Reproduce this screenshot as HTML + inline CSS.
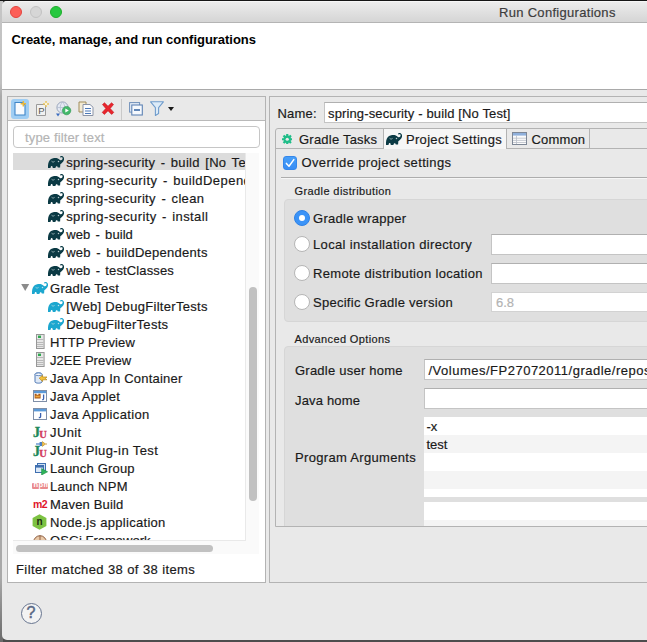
<!DOCTYPE html>
<html lang="en">
<head>
<meta charset="utf-8">
<title>Run Configurations</title>
<style>
*{box-sizing:border-box;margin:0;padding:0}
html,body{width:647px;height:642px;overflow:hidden}
body{position:relative;background:#4d4d4d;font-family:"Liberation Sans",sans-serif;font-size:13px;color:#1a1a1a}
.abs{position:absolute}
.t{position:absolute;white-space:nowrap;line-height:16px;height:16px;-webkit-text-stroke:.18px currentColor}
#strip{left:0;top:0;width:3px;height:642px;background:linear-gradient(#c6c6c6 0,#c0c0c0 13%,#a9a9a9 15%,#a9a9a9 90%,#6a6a6a 100%)}
#topline{left:0;top:0;width:647px;height:1px;background:#151515}
#win{left:2px;top:1px;width:700px;height:639px;background:#e9e9e9;border-radius:5px 0 0 5px;overflow:hidden}
#titlebar{left:0;top:0;width:700px;height:22px;background:linear-gradient(#ececec,#d5d5d5);border-bottom:1px solid #b4b4b4;border-top:1px solid #f6f6f6}
.tl{position:absolute;top:4px;width:12px;height:12px;border-radius:50%;border:1px solid}
#header{left:0;top:22px;width:700px;height:66px;background:#fff}
#hsep{left:0;top:88px;width:700px;height:1px;background:#a9a9a9}
#lp{left:5px;top:95px;width:259px;height:487px;background:#fff;border:1px solid #b3b3b3}
#tb{left:0;top:0;width:257px;height:24px;background:#e9e9e9;border-bottom:1px solid #b9b9b9}
#filter{left:5px;top:29px;width:247px;height:22px;border:1px solid #c6c6c6;border-radius:4px;background:#fff}
#tree{left:5px;top:56px;width:232px;height:387px;overflow:hidden}
.row{position:absolute;left:0;width:232px;height:18px}
.row .t{top:2px}
.ic{position:absolute}
#vtrack{left:237px;top:56px;width:14px;height:401px;background:#fafafa;border-left:1px solid #e9e9e9}
#vthumb{left:3px;top:134px;width:8px;height:214px;border-radius:4px;background:#c1c1c1}
#htrack{left:5px;top:443px;width:233px;height:14px;background:#fafafa;border-top:1px solid #e9e9e9}
#hthumb{left:3px;top:4px;width:197px;height:7px;border-radius:4px;background:#c1c1c1}
#rp{left:267px;top:95px;width:440px;height:487px;border:1px solid #b3b3b3;background:#e9e9e9}
.inp{position:absolute;background:#fff;border:1px solid #c4c4c4;border-top-color:#b0b0b0}
#tabs{left:5px;top:31px;width:440px;height:399px;border:1px solid #b3b3b3;border-radius:3px 0 0 0;overflow:hidden}
.tab{position:absolute;top:0;height:20px;border-right:1px solid #b3b3b3;border-bottom:1px solid #b3b3b3}
#tabline{left:0;top:19px;width:440px;height:1px;background:#b3b3b3}
.grp{position:absolute;left:8px;width:440px;background:#dfdfdf;border:1px solid #d6d6d6;border-radius:4px 0 0 4px}
.small{font-size:11px;line-height:14px;height:14px}
.radio{position:absolute;width:16px;height:16px;border-radius:50%;background:#fff;border:1px solid #b5b5b5}
.radio.on{background:#3b93f7;border-color:#2f82e6}
.radio.on::after{content:"";position:absolute;left:4px;top:4px;width:6px;height:6px;border-radius:50%;background:#fff}
.zr{position:absolute;left:0;width:300px;height:18px}
</style>
</head>
<body>
<div id="strip" class="abs"></div>
<div id="win" class="abs">
  <div id="titlebar" class="abs">
    <div class="tl" style="left:8px;background:#fc5f58;border-color:#e2453f"></div>
    <div class="tl" style="left:28px;background:#d6d6d6;border-color:#c2c2c2"></div>
    <div class="tl" style="left:48px;background:#27c840;border-color:#1dad2b"></div>
    <div class="t" id="title" style="letter-spacing:0.3px;left:497px;top:3px;color:#3c3c3c">Run Configurations</div>
  </div>
  <div id="header" class="abs">
    <div class="t" id="htext" style="letter-spacing:-0.03px;left:9.5px;top:9px;font-weight:bold;color:#000;-webkit-text-stroke:0">Create, manage, and run configurations</div>
  </div>
  <div id="hsep" class="abs"></div>

  <!-- LEFT PANEL -->
  <div id="lp" class="abs">
    <div id="tb" class="abs">
      <div class="abs" style="left:3px;top:2px;width:18px;height:20px;border-radius:3px;background:#9fcdf3"></div>
      <svg class="ic" style="left:6px;top:4px" width="13" height="15" viewBox="0 0 13 15"><path d="M1,1.5H8.5L11,4V14H1Z" fill="#f7fafe" stroke="#3f86c8" stroke-width="1.1"/><path d="M9.3,0V5.4M6.6,2.7H12" stroke="#e9b73a" stroke-width="1.5"/></svg>
      <svg class="ic" style="left:28px;top:4px" width="14" height="15" viewBox="0 0 14 15"><path d="M.5,3.5H9.5V14.5H.5Z" fill="#f1f1f1" stroke="#9a9a9a"/><text x="2.3" y="12.6" font-family="Liberation Sans,sans-serif" font-size="9.5" fill="#555">P</text><path d="M10,0V6M7,3H13" stroke="#e9c45a" stroke-width="1.5"/><circle cx="10" cy="3" r="1.2" fill="#fff7da"/></svg>
      <svg class="ic" style="left:47px;top:4px" width="17" height="16" viewBox="0 0 17 16"><circle cx="7.5" cy="6.5" r="5.6" fill="#e4e9f2" stroke="#9aa5bb" stroke-width="1"/><path d="M2,6.5H13M7.5,1C4.5,4 4.5,9 7.5,12M7.5,1C10.5,4 10.5,9 7.5,12" fill="none" stroke="#b4bdd0" stroke-width=".8"/><circle cx="11.6" cy="9.6" r="4.2" fill="#43b86a" stroke="#2b9650" stroke-width=".6"/><path d="M10.3,7.6L13.8,9.6L10.3,11.6Z" fill="#fff"/><path d="M1,12.5H5L3,15.5Z" fill="#3b6cc0"/></svg>
      <svg class="ic" style="left:70px;top:4px" width="16" height="15" viewBox="0 0 16 15"><path d="M1,1H8V11H1Z" fill="#f3ead2" stroke="#a08c5a" stroke-width="1"/><path d="M5,3.5H12L15,6.2V14.5H5Z" fill="#fbfcfe" stroke="#8a93a6" stroke-width="1"/><path d="M7,7.5H13M7,10H13M7,12.5H13" stroke="#4a78b8" stroke-width="1"/></svg>
      <svg class="ic" style="left:93px;top:5px" width="14" height="13" viewBox="0 0 14 13"><path d="M1.5,2.5L3.5,.8L7,4.2L10.5,.8L12.5,2.5L9.2,6.5L12.8,10.4L10.6,12.4L7,8.8L3.4,12.4L1.2,10.4L4.8,6.5Z" fill="#e8262d" stroke="#c4161d" stroke-width=".6"/></svg>
      <div class="abs" style="left:113px;top:2px;width:1px;height:21px;background:#c9c9c9"></div>
      <svg class="ic" style="left:121px;top:5px" width="14" height="14" viewBox="0 0 14 14"><rect x=".6" y=".6" width="10" height="9.5" fill="#e6eef8" stroke="#6f8fb8" stroke-width="1"/><rect x="2.8" y="3" width="10.5" height="10" fill="#f6f9fd" stroke="#5f83b4" stroke-width="1.1"/><path d="M5,8H11" stroke="#2f5f9f" stroke-width="1.4"/></svg>
      <svg class="ic" style="left:142px;top:4px" width="14" height="15" viewBox="0 0 14 15"><path d="M.6,.8H13.4L8.6,6.6V12.6L5.4,14.4V6.6Z" fill="#dcebf8" stroke="#6f9ccc" stroke-width="1.1" stroke-linejoin="round"/></svg>
      <svg class="ic" style="left:160px;top:10px" width="6" height="4" viewBox="0 0 6 4"><path d="M0,0H6L3,4Z" fill="#1a1a1a"/></svg>

    </div>
    <div id="filter" class="abs"><div class="t" style="left:11px;top:3px;color:#b4b4b4;letter-spacing:.14px">type filter text</div></div>
    <div id="tree" class="abs">
      <div class="row" style="top:0px;background:#dcdcdc;height:17px"><svg class="ic" style="left:35px;top:3px" width="16" height="12" viewBox="0 0 16 12"><path d="M0,11.9 C-0.2,8 0.5,5 3,3.1 C4.5,2.1 7.5,1.7 9.3,2.2 C10.5,2.6 11.2,3.5 11.9,3.9 C12.8,4.4 13.8,4.2 14.3,3.4 C14.8,2.6 14.7,1.7 14.1,1.3 C13.6,1 13,1.2 12.7,1.6 L11.8,0.9 C12.4,0 13.8,-0.2 14.9,0.5 C16.2,1.4 16.4,3.2 15.7,4.6 C15,6.2 13.8,7.4 12.3,8.3 L12.1,11.6 L9.8,11.6 C9.6,10.6 9.2,10.3 8.6,10.3 C8,10.3 7.7,10.8 7.4,11.9 L4.8,11.9 C4.6,10.6 4.2,10.1 3.7,10.1 C3.1,10.1 2.8,10.7 2.5,11.9 Z" fill="#0b3a44"/><path d="M3.5,5.2 Q5,7.2 6.6,5.4" stroke="#d8e8ea" stroke-width=".8" fill="none" opacity=".75"/><circle cx="10.5" cy="5.4" r=".75" fill="#e6f0f2" opacity=".8"/></svg><div class="t tr" style="left:53.2px;letter-spacing:0.308px;word-spacing:1.5px">spring-security - build [No Test]</div></div>
      <div class="row" style="top:18px"><svg class="ic" style="left:35px;top:3px" width="16" height="12" viewBox="0 0 16 12"><path d="M0,11.9 C-0.2,8 0.5,5 3,3.1 C4.5,2.1 7.5,1.7 9.3,2.2 C10.5,2.6 11.2,3.5 11.9,3.9 C12.8,4.4 13.8,4.2 14.3,3.4 C14.8,2.6 14.7,1.7 14.1,1.3 C13.6,1 13,1.2 12.7,1.6 L11.8,0.9 C12.4,0 13.8,-0.2 14.9,0.5 C16.2,1.4 16.4,3.2 15.7,4.6 C15,6.2 13.8,7.4 12.3,8.3 L12.1,11.6 L9.8,11.6 C9.6,10.6 9.2,10.3 8.6,10.3 C8,10.3 7.7,10.8 7.4,11.9 L4.8,11.9 C4.6,10.6 4.2,10.1 3.7,10.1 C3.1,10.1 2.8,10.7 2.5,11.9 Z" fill="#0b3a44"/><path d="M3.5,5.2 Q5,7.2 6.6,5.4" stroke="#d8e8ea" stroke-width=".8" fill="none" opacity=".75"/><circle cx="10.5" cy="5.4" r=".75" fill="#e6f0f2" opacity=".8"/></svg><div class="t tr" style="left:53.2px;letter-spacing:0.44799999999999995px;word-spacing:1.5px">spring-security - buildDependents</div></div>
      <div class="row" style="top:36px"><svg class="ic" style="left:35px;top:3px" width="16" height="12" viewBox="0 0 16 12"><path d="M0,11.9 C-0.2,8 0.5,5 3,3.1 C4.5,2.1 7.5,1.7 9.3,2.2 C10.5,2.6 11.2,3.5 11.9,3.9 C12.8,4.4 13.8,4.2 14.3,3.4 C14.8,2.6 14.7,1.7 14.1,1.3 C13.6,1 13,1.2 12.7,1.6 L11.8,0.9 C12.4,0 13.8,-0.2 14.9,0.5 C16.2,1.4 16.4,3.2 15.7,4.6 C15,6.2 13.8,7.4 12.3,8.3 L12.1,11.6 L9.8,11.6 C9.6,10.6 9.2,10.3 8.6,10.3 C8,10.3 7.7,10.8 7.4,11.9 L4.8,11.9 C4.6,10.6 4.2,10.1 3.7,10.1 C3.1,10.1 2.8,10.7 2.5,11.9 Z" fill="#0b3a44"/><path d="M3.5,5.2 Q5,7.2 6.6,5.4" stroke="#d8e8ea" stroke-width=".8" fill="none" opacity=".75"/><circle cx="10.5" cy="5.4" r=".75" fill="#e6f0f2" opacity=".8"/></svg><div class="t tr" style="left:53.2px;letter-spacing:0.348px;word-spacing:1.5px">spring-security - clean</div></div>
      <div class="row" style="top:54px"><svg class="ic" style="left:35px;top:3px" width="16" height="12" viewBox="0 0 16 12"><path d="M0,11.9 C-0.2,8 0.5,5 3,3.1 C4.5,2.1 7.5,1.7 9.3,2.2 C10.5,2.6 11.2,3.5 11.9,3.9 C12.8,4.4 13.8,4.2 14.3,3.4 C14.8,2.6 14.7,1.7 14.1,1.3 C13.6,1 13,1.2 12.7,1.6 L11.8,0.9 C12.4,0 13.8,-0.2 14.9,0.5 C16.2,1.4 16.4,3.2 15.7,4.6 C15,6.2 13.8,7.4 12.3,8.3 L12.1,11.6 L9.8,11.6 C9.6,10.6 9.2,10.3 8.6,10.3 C8,10.3 7.7,10.8 7.4,11.9 L4.8,11.9 C4.6,10.6 4.2,10.1 3.7,10.1 C3.1,10.1 2.8,10.7 2.5,11.9 Z" fill="#0b3a44"/><path d="M3.5,5.2 Q5,7.2 6.6,5.4" stroke="#d8e8ea" stroke-width=".8" fill="none" opacity=".75"/><circle cx="10.5" cy="5.4" r=".75" fill="#e6f0f2" opacity=".8"/></svg><div class="t tr" style="left:53.2px;letter-spacing:0.389px;word-spacing:1.5px">spring-security - install</div></div>
      <div class="row" style="top:72px"><svg class="ic" style="left:35px;top:3px" width="16" height="12" viewBox="0 0 16 12"><path d="M0,11.9 C-0.2,8 0.5,5 3,3.1 C4.5,2.1 7.5,1.7 9.3,2.2 C10.5,2.6 11.2,3.5 11.9,3.9 C12.8,4.4 13.8,4.2 14.3,3.4 C14.8,2.6 14.7,1.7 14.1,1.3 C13.6,1 13,1.2 12.7,1.6 L11.8,0.9 C12.4,0 13.8,-0.2 14.9,0.5 C16.2,1.4 16.4,3.2 15.7,4.6 C15,6.2 13.8,7.4 12.3,8.3 L12.1,11.6 L9.8,11.6 C9.6,10.6 9.2,10.3 8.6,10.3 C8,10.3 7.7,10.8 7.4,11.9 L4.8,11.9 C4.6,10.6 4.2,10.1 3.7,10.1 C3.1,10.1 2.8,10.7 2.5,11.9 Z" fill="#0b3a44"/><path d="M3.5,5.2 Q5,7.2 6.6,5.4" stroke="#d8e8ea" stroke-width=".8" fill="none" opacity=".75"/><circle cx="10.5" cy="5.4" r=".75" fill="#e6f0f2" opacity=".8"/></svg><div class="t tr" style="left:53.2px;letter-spacing:0.08px;word-spacing:1.5px">web - build</div></div>
      <div class="row" style="top:90px"><svg class="ic" style="left:35px;top:3px" width="16" height="12" viewBox="0 0 16 12"><path d="M0,11.9 C-0.2,8 0.5,5 3,3.1 C4.5,2.1 7.5,1.7 9.3,2.2 C10.5,2.6 11.2,3.5 11.9,3.9 C12.8,4.4 13.8,4.2 14.3,3.4 C14.8,2.6 14.7,1.7 14.1,1.3 C13.6,1 13,1.2 12.7,1.6 L11.8,0.9 C12.4,0 13.8,-0.2 14.9,0.5 C16.2,1.4 16.4,3.2 15.7,4.6 C15,6.2 13.8,7.4 12.3,8.3 L12.1,11.6 L9.8,11.6 C9.6,10.6 9.2,10.3 8.6,10.3 C8,10.3 7.7,10.8 7.4,11.9 L4.8,11.9 C4.6,10.6 4.2,10.1 3.7,10.1 C3.1,10.1 2.8,10.7 2.5,11.9 Z" fill="#0b3a44"/><path d="M3.5,5.2 Q5,7.2 6.6,5.4" stroke="#d8e8ea" stroke-width=".8" fill="none" opacity=".75"/><circle cx="10.5" cy="5.4" r=".75" fill="#e6f0f2" opacity=".8"/></svg><div class="t tr" style="left:53.2px;letter-spacing:0.262px;word-spacing:1.5px">web - buildDependents</div></div>
      <div class="row" style="top:108px"><svg class="ic" style="left:35px;top:3px" width="16" height="12" viewBox="0 0 16 12"><path d="M0,11.9 C-0.2,8 0.5,5 3,3.1 C4.5,2.1 7.5,1.7 9.3,2.2 C10.5,2.6 11.2,3.5 11.9,3.9 C12.8,4.4 13.8,4.2 14.3,3.4 C14.8,2.6 14.7,1.7 14.1,1.3 C13.6,1 13,1.2 12.7,1.6 L11.8,0.9 C12.4,0 13.8,-0.2 14.9,0.5 C16.2,1.4 16.4,3.2 15.7,4.6 C15,6.2 13.8,7.4 12.3,8.3 L12.1,11.6 L9.8,11.6 C9.6,10.6 9.2,10.3 8.6,10.3 C8,10.3 7.7,10.8 7.4,11.9 L4.8,11.9 C4.6,10.6 4.2,10.1 3.7,10.1 C3.1,10.1 2.8,10.7 2.5,11.9 Z" fill="#0b3a44"/><path d="M3.5,5.2 Q5,7.2 6.6,5.4" stroke="#d8e8ea" stroke-width=".8" fill="none" opacity=".75"/><circle cx="10.5" cy="5.4" r=".75" fill="#e6f0f2" opacity=".8"/></svg><div class="t tr" style="left:53.2px;letter-spacing:0.125px;word-spacing:1.5px">web - testClasses</div></div>
      <div class="row" style="top:126px"><svg class="ic" style="left:8.3px;top:5px" width="8.4" height="7" viewBox="0 0 8 7"><path d="M0,0H8L4,7Z" fill="#8b8b8b"/></svg><svg class="ic" style="left:19px;top:3px" width="16" height="12" viewBox="0 0 16 12"><path d="M0,11.9 C-0.2,8 0.5,5 3,3.1 C4.5,2.1 7.5,1.7 9.3,2.2 C10.5,2.6 11.2,3.5 11.9,3.9 C12.8,4.4 13.8,4.2 14.3,3.4 C14.8,2.6 14.7,1.7 14.1,1.3 C13.6,1 13,1.2 12.7,1.6 L11.8,0.9 C12.4,0 13.8,-0.2 14.9,0.5 C16.2,1.4 16.4,3.2 15.7,4.6 C15,6.2 13.8,7.4 12.3,8.3 L12.1,11.6 L9.8,11.6 C9.6,10.6 9.2,10.3 8.6,10.3 C8,10.3 7.7,10.8 7.4,11.9 L4.8,11.9 C4.6,10.6 4.2,10.1 3.7,10.1 C3.1,10.1 2.8,10.7 2.5,11.9 Z" fill="#1ca7cf"/><path d="M3.5,5.2 Q5,7.2 6.6,5.4" stroke="#d8e8ea" stroke-width=".8" fill="none" opacity=".75"/><circle cx="10.5" cy="5.4" r=".75" fill="#e6f0f2" opacity=".8"/></svg><div class="t tr" style="left:37.1px;letter-spacing:0.258px">Gradle Test</div></div>
      <div class="row" style="top:144px"><svg class="ic" style="left:35px;top:3px" width="16" height="12" viewBox="0 0 16 12"><path d="M0,11.9 C-0.2,8 0.5,5 3,3.1 C4.5,2.1 7.5,1.7 9.3,2.2 C10.5,2.6 11.2,3.5 11.9,3.9 C12.8,4.4 13.8,4.2 14.3,3.4 C14.8,2.6 14.7,1.7 14.1,1.3 C13.6,1 13,1.2 12.7,1.6 L11.8,0.9 C12.4,0 13.8,-0.2 14.9,0.5 C16.2,1.4 16.4,3.2 15.7,4.6 C15,6.2 13.8,7.4 12.3,8.3 L12.1,11.6 L9.8,11.6 C9.6,10.6 9.2,10.3 8.6,10.3 C8,10.3 7.7,10.8 7.4,11.9 L4.8,11.9 C4.6,10.6 4.2,10.1 3.7,10.1 C3.1,10.1 2.8,10.7 2.5,11.9 Z" fill="#1ca7cf"/><path d="M3.5,5.2 Q5,7.2 6.6,5.4" stroke="#d8e8ea" stroke-width=".8" fill="none" opacity=".75"/><circle cx="10.5" cy="5.4" r=".75" fill="#e6f0f2" opacity=".8"/></svg><div class="t tr" style="left:53.2px;letter-spacing:0.308px">[Web] DebugFilterTests</div></div>
      <div class="row" style="top:162px"><svg class="ic" style="left:35px;top:3px" width="16" height="12" viewBox="0 0 16 12"><path d="M0,11.9 C-0.2,8 0.5,5 3,3.1 C4.5,2.1 7.5,1.7 9.3,2.2 C10.5,2.6 11.2,3.5 11.9,3.9 C12.8,4.4 13.8,4.2 14.3,3.4 C14.8,2.6 14.7,1.7 14.1,1.3 C13.6,1 13,1.2 12.7,1.6 L11.8,0.9 C12.4,0 13.8,-0.2 14.9,0.5 C16.2,1.4 16.4,3.2 15.7,4.6 C15,6.2 13.8,7.4 12.3,8.3 L12.1,11.6 L9.8,11.6 C9.6,10.6 9.2,10.3 8.6,10.3 C8,10.3 7.7,10.8 7.4,11.9 L4.8,11.9 C4.6,10.6 4.2,10.1 3.7,10.1 C3.1,10.1 2.8,10.7 2.5,11.9 Z" fill="#1ca7cf"/><path d="M3.5,5.2 Q5,7.2 6.6,5.4" stroke="#d8e8ea" stroke-width=".8" fill="none" opacity=".75"/><circle cx="10.5" cy="5.4" r=".75" fill="#e6f0f2" opacity=".8"/></svg><div class="t tr" style="left:53.2px;letter-spacing:0.29px">DebugFilterTests</div></div>
      <div class="row" style="top:180px"><svg class="ic" style="left:23px;top:1px" width="9" height="15" viewBox="0 0 9 15"><rect x=".5" y=".5" width="7.6" height="14" fill="#e6e6e6" stroke="#979797"/><rect x="2" y="1.6" width="3" height="2.4" fill="#2fa84f"/><path d="M1,5.5H7.6M1,8.5H7.6M1,10.5H7.6M1,12.5H7.6" stroke="#b9b9b9" stroke-width="1"/></svg><div class="t tr" style="left:37.1px;letter-spacing:0.105px">HTTP Preview</div></div>
      <div class="row" style="top:198px"><svg class="ic" style="left:23px;top:1px" width="9" height="15" viewBox="0 0 9 15"><rect x=".5" y=".5" width="7.6" height="14" fill="#e6e6e6" stroke="#979797"/><rect x="2" y="1.6" width="3" height="2.4" fill="#2fa84f"/><path d="M1,5.5H7.6M1,8.5H7.6M1,10.5H7.6M1,12.5H7.6" stroke="#b9b9b9" stroke-width="1"/></svg><div class="t tr" style="left:37.1px;letter-spacing:0.021px">J2EE Preview</div></div>
      <div class="row" style="top:216px"><svg class="ic" style="left:21px;top:3px" width="14" height="12" viewBox="0 0 14 12"><path d="M1,2.2 C1,0.4 8,0.4 8,2.2 V9.8 C8,11.6 1,11.6 1,9.8 Z" fill="#dfe9f6" stroke="#4f78b4" stroke-width="1"/><ellipse cx="4.5" cy="2.3" rx="3.5" ry="1.3" fill="#f4f8fd" stroke="#4f78b4" stroke-width=".8"/><path d="M5.2,6.2 L8.6,3.2 V5 H13 L11.2,6.4 L13,7.8 H8.6 V9.4 Z" fill="#f4c23c" stroke="#b9861a" stroke-width=".7"/></svg><div class="t tr" style="left:37.1px;letter-spacing:0.215px">Java App In Container</div></div>
      <div class="row" style="top:234px"><svg class="ic" style="left:20px;top:3px" width="14" height="12" viewBox="0 0 14 12"><rect x=".5" y=".5" width="13" height="11" fill="#fff" stroke="#7f8fa8"/><rect x="1" y="1" width="12" height="2.2" fill="#5b9ad8"/><path d="M1.6,3.8 H3.6 V4.8 H5.4 V3.8 H7.6 V8.4 H1.6 Z" fill="#a85a1c"/><path d="M2.4,5.6 H6.8 V7.4 H2.4Z" fill="#f0a83c"/><path d="M10.6,4.6 V8.6 Q10.6,9.8 9.2,9.6" fill="none" stroke="#3b62b0" stroke-width="1.3"/></svg><div class="t tr" style="left:37.1px;letter-spacing:0.26px">Java Applet</div></div>
      <div class="row" style="top:252px"><svg class="ic" style="left:20px;top:3px" width="14" height="12" viewBox="0 0 14 12"><rect x=".5" y=".5" width="13" height="11" fill="#fff" stroke="#7f8fa8"/><rect x="1" y="1" width="12" height="2.4" fill="#5b9ad8"/><path d="M7.6,5 V8.4 Q7.6,9.8 5.8,9.5" fill="none" stroke="#3b62b0" stroke-width="1.3"/></svg><div class="t tr" style="left:37.1px;letter-spacing:0.35px">Java Application</div></div>
      <div class="row" style="top:270px"><span class="ic" style="left:20px;top:4px;width:16px;height:12px;font-family:'Liberation Serif',serif;line-height:12px;white-space:nowrap"><b style="color:#1f8a5b;font-size:14px;position:absolute;left:0;top:0;-webkit-text-stroke:.4px #1f8a5b">J</b><b style="color:#d23a5c;font-size:10.5px;position:absolute;left:6.3px;top:2px;-webkit-text-stroke:.3px #d23a5c">U</b></span><div class="t tr" style="left:37.1px;letter-spacing:0.348px">JUnit</div></div>
      <div class="row" style="top:288px"><span class="ic" style="left:20px;top:5px;width:16px;height:12px;font-family:'Liberation Serif',serif;line-height:12px;white-space:nowrap"><b style="color:#1f8a5b;font-size:14px;position:absolute;left:0;top:0;-webkit-text-stroke:.4px #1f8a5b">J</b><b style="color:#d23a5c;font-size:10.5px;position:absolute;left:6.3px;top:2px;-webkit-text-stroke:.3px #d23a5c">U</b></span><svg class="ic" style="left:23px;top:0px" width="11" height="6" viewBox="0 0 11 6"><path d="M0,3H4" stroke="#4a7fc8" stroke-width="1.2"/><rect x="3.6" y="1" width="2.4" height="4" fill="#4a7fc8"/><path d="M6.4,.6 L9.4,3 L6.4,5.4Z" fill="#f2c14a" stroke="#b98a1f" stroke-width=".6"/><path d="M9.4,3H11" stroke="#b98a1f" stroke-width=".8"/></svg><div class="t tr" style="left:37.1px;letter-spacing:0.402px">JUnit Plug-in Test</div></div>
      <div class="row" style="top:306px"><svg class="ic" style="left:22px;top:4px" width="13" height="12" viewBox="0 0 13 12"><rect x="2.5" y=".5" width="8" height="7" fill="#cfe0f3" stroke="#3f6fb0"/><rect x=".5" y="2.5" width="8" height="7" fill="#dbe8f7" stroke="#3f6fb0"/><rect x="1" y="3" width="7" height="1.6" fill="#3f6fb0"/><path d="M6.6,5.6 L12.6,8.8 L6.6,12Z" fill="#2fb35a" stroke="#1d8f43" stroke-width=".6"/></svg><div class="t tr" style="left:37.1px;letter-spacing:0.185px">Launch Group</div></div>
      <div class="row" style="top:324px"><span class="ic" style="left:19px;top:6px;width:16px;height:6px;background:#ea8a8d;border-radius:1px;overflow:hidden"><span style="position:absolute;left:1.5px;top:-4px;font-size:7.5px;line-height:12px;font-weight:bold;color:#fff;letter-spacing:.4px">npm</span></span><div class="t tr" style="left:37.1px;letter-spacing:0.25px">Launch NPM</div></div>
      <div class="row" style="top:342px"><span class="ic" style="left:20px;top:3px;font-size:10.5px;line-height:12px;font-weight:bold;color:#e0162b;letter-spacing:-.6px">m2</span><div class="t tr" style="left:37.1px;letter-spacing:0.17px">Maven Build</div></div>
      <div class="row" style="top:360px"><svg class="ic" style="left:19px;top:1px" width="15" height="16" viewBox="0 0 15 16"><path d="M7.5,.3 L14.4,4.1 V11.9 L7.5,15.7 L.6,11.9 V4.1Z" fill="#7dc242"/><text x="7.5" y="11.2" text-anchor="middle" font-family="Liberation Sans,sans-serif" font-weight="bold" font-size="10" fill="#1c2b12">n</text></svg><div class="t tr" style="left:37.1px;letter-spacing:0.3px">Node.js application</div></div>
      <div class="row" style="top:378px"><svg class="ic" style="left:20px;top:4px" width="14" height="14" viewBox="0 0 14 14"><circle cx="7" cy="7" r="6.3" fill="#e9c9a8" stroke="#8b5a3c" stroke-width="1"/><path d="M7,.7V13M.7,7H13.3" stroke="#8b5a3c" stroke-width=".9"/></svg><div class="t tr" style="left:37.1px;letter-spacing:0.003px">OSGi Framework</div></div>
    </div>
    <div id="vtrack" class="abs"><div id="vthumb" class="abs"></div></div>
    <div id="htrack" class="abs"><div id="hthumb" class="abs"></div></div>
    <div class="t" id="fm" style="letter-spacing:0.4px;left:8px;top:465px">Filter matched 38 of 38 items</div>
  </div>

  <!-- RIGHT PANEL -->
  <div id="rp" class="abs">
    <div class="t" id="nm" style="letter-spacing:0.2px;left:7.5px;top:9px">Name:</div>
    <div class="inp" style="left:54px;top:5px;width:400px;height:21px"><div class="t" id="nmv" style="letter-spacing:0.13px;left:3px;top:3px">spring-security - build [No Test]</div></div>
    <div id="tabs" class="abs">
      <div id="tabline" class="abs"></div>
      <div class="tab" style="left:0;width:108px">
        <svg class="ic" style="left:5.7px;top:4.6px" width="10.5" height="10.5" viewBox="0 0 11 11"><g fill="#1fbd88"><circle cx="5.5" cy="5.5" r="3.9"/><g stroke="#1fbd88" stroke-width="2.3"><path d="M5.5,0V11M0,5.5H11M1.6,1.6L9.4,9.4M9.4,1.6L1.6,9.4"/></g></g><circle cx="5.5" cy="5.5" r="1.7" fill="#e9e9e9"/></svg>
        <div class="t" id="tab1" style="letter-spacing:0.22px;left:23px;top:3px">Gradle Tasks</div>
      </div>
      <div class="tab" style="left:108px;width:123px;background:#f6f6f6;border-bottom:none;height:20px">
        <svg class="ic" style="left:2px;top:4px" width="16" height="12" viewBox="0 0 16 12"><path d="M0,11.9 C-0.2,8 0.5,5 3,3.1 C4.5,2.1 7.5,1.7 9.3,2.2 C10.5,2.6 11.2,3.5 11.9,3.9 C12.8,4.4 13.8,4.2 14.3,3.4 C14.8,2.6 14.7,1.7 14.1,1.3 C13.6,1 13,1.2 12.7,1.6 L11.8,0.9 C12.4,0 13.8,-0.2 14.9,0.5 C16.2,1.4 16.4,3.2 15.7,4.6 C15,6.2 13.8,7.4 12.3,8.3 L12.1,11.6 L9.8,11.6 C9.6,10.6 9.2,10.3 8.6,10.3 C8,10.3 7.7,10.8 7.4,11.9 L4.8,11.9 C4.6,10.6 4.2,10.1 3.7,10.1 C3.1,10.1 2.8,10.7 2.5,11.9 Z" fill="#0b3a44"/><path d="M3.5,5.2 Q5,7.2 6.6,5.4" stroke="#d8e8ea" stroke-width=".8" fill="none" opacity=".75"/><circle cx="10.5" cy="5.4" r=".75" fill="#e6f0f2" opacity=".8"/></svg>
        <div class="t" id="tab2" style="letter-spacing:0.31px;left:22px;top:3px">Project Settings</div>
      </div>
      <div class="tab" style="left:231px;width:83px">
        <svg class="ic" style="left:4.5px;top:3px" width="15" height="13" viewBox="0 0 15 13"><rect x=".5" y=".5" width="14" height="12" fill="#fbfbfb" stroke="#7d8796"/><rect x="1" y="1" width="13" height="2.6" fill="#8fb0dc"/><path d="M4.5,3.6V12M1,6.2H14M1,8.4H14M1,10.5H14" stroke="#b9bec8" stroke-width=".8"/></svg>
        <div class="t" id="tab3" style="letter-spacing:0.15px;left:24.5px;top:3px">Common</div>
      </div>

      <div class="abs" style="left:7px;top:27px;width:14px;height:14px;border-radius:3px;background:linear-gradient(#469ff9,#388df4);border:.5px solid #3486ea"></div>
      <svg class="ic" style="left:7px;top:27px" width="14" height="14" viewBox="0 0 14 14"><path d="M3.4,7.4L6,10.2L10.8,3.6" fill="none" stroke="#fff" stroke-width="1.5" stroke-linecap="round" stroke-linejoin="round"/></svg>
      <div class="t" id="ovr" style="letter-spacing:0.36px;left:25.5px;top:26px">Override project settings</div>
      <div class="abs" style="left:5px;top:48px;width:440px;height:2px;background:linear-gradient(#adadad 50%,#f6f6f6 50%)"></div>

      <div class="t small" id="gd" style="letter-spacing:0.4px;left:18.5px;top:55px">Gradle distribution</div>
      <div class="grp" style="top:70px;height:123px">
        <div class="radio on" style="left:9px;top:10px"></div>
        <div class="radio" style="left:9px;top:36px"></div>
        <div class="radio" style="left:9px;top:65px"></div>
        <div class="radio" style="left:9px;top:94px"></div>
        <div class="t" id="r1" style="letter-spacing:0.27px;left:28px;top:11px">Gradle wrapper</div>
        <div class="t" id="r2" style="letter-spacing:0.34px;left:28px;top:37px">Local installation directory</div>
        <div class="t" id="r3" style="letter-spacing:0.34px;left:28px;top:66px">Remote distribution location</div>
        <div class="t" id="r4" style="letter-spacing:0.27px;left:28px;top:95px">Specific Gradle version</div>
        <div class="inp" style="left:206px;top:34px;width:300px;height:21px"></div>
        <div class="inp" style="left:206px;top:63px;width:300px;height:21px"></div>
        <div class="inp" style="left:206px;top:92px;width:300px;height:20px;border-color:#d2d2d2"><div class="t" style="left:4px;top:2px;color:#b3b3b3">6.8</div></div>
      </div>

      <div class="t small" id="ao" style="letter-spacing:0.375px;left:18.5px;top:203px">Advanced Options</div>
      <div class="grp" style="top:217px;height:220px">
        <div class="t" id="g1" style="letter-spacing:0.23px;left:10px;top:16px">Gradle user home</div>
        <div class="t" id="g2" style="letter-spacing:0.17px;left:10px;top:46px">Java home</div>
        <div class="t" id="g3" style="letter-spacing:0.32px;left:10px;top:102.5px">Program Arguments</div>
        <div class="inp" style="left:139px;top:12px;width:300px;height:21px"><div class="t" id="vol" style="letter-spacing:0.5px;left:3.5px;top:3px">/Volumes/FP27072011/gradle/repository</div></div>
        <div class="inp" style="left:139px;top:41px;width:300px;height:21px"></div>
        <div class="abs" style="left:139px;top:70px;width:300px;height:80px;background:#fff;overflow:hidden">
          <div class="zr" style="top:18px;background:#f4f4f4"></div>
          <div class="zr" style="top:54px;background:#f4f4f4"></div>
          <div class="t" style="left:2.5px;top:2px">-x</div>
          <div class="t" style="left:2.5px;top:20px">test</div>
        </div>
        <div class="abs" style="left:139px;top:155px;width:300px;height:60px;background:#fff;overflow:hidden">
          <div class="zr" style="top:18px;background:#f4f4f4"></div>
        </div>
      </div>

    </div>
  </div>

  <!-- help -->
  <div class="abs" id="help" style="left:18.5px;top:601.5px;width:21px;height:21px;border-radius:50%;border:1.3px solid #66748f;background:#f3f3f3"></div>
  <div class="t" style="left:18.5px;top:604px;width:21px;text-align:center;font-size:16px;color:#5a6986;-webkit-text-stroke:.5px #5a6986">?</div>
</div>
<div id="topline" class="abs"></div>
</body>
</html>
